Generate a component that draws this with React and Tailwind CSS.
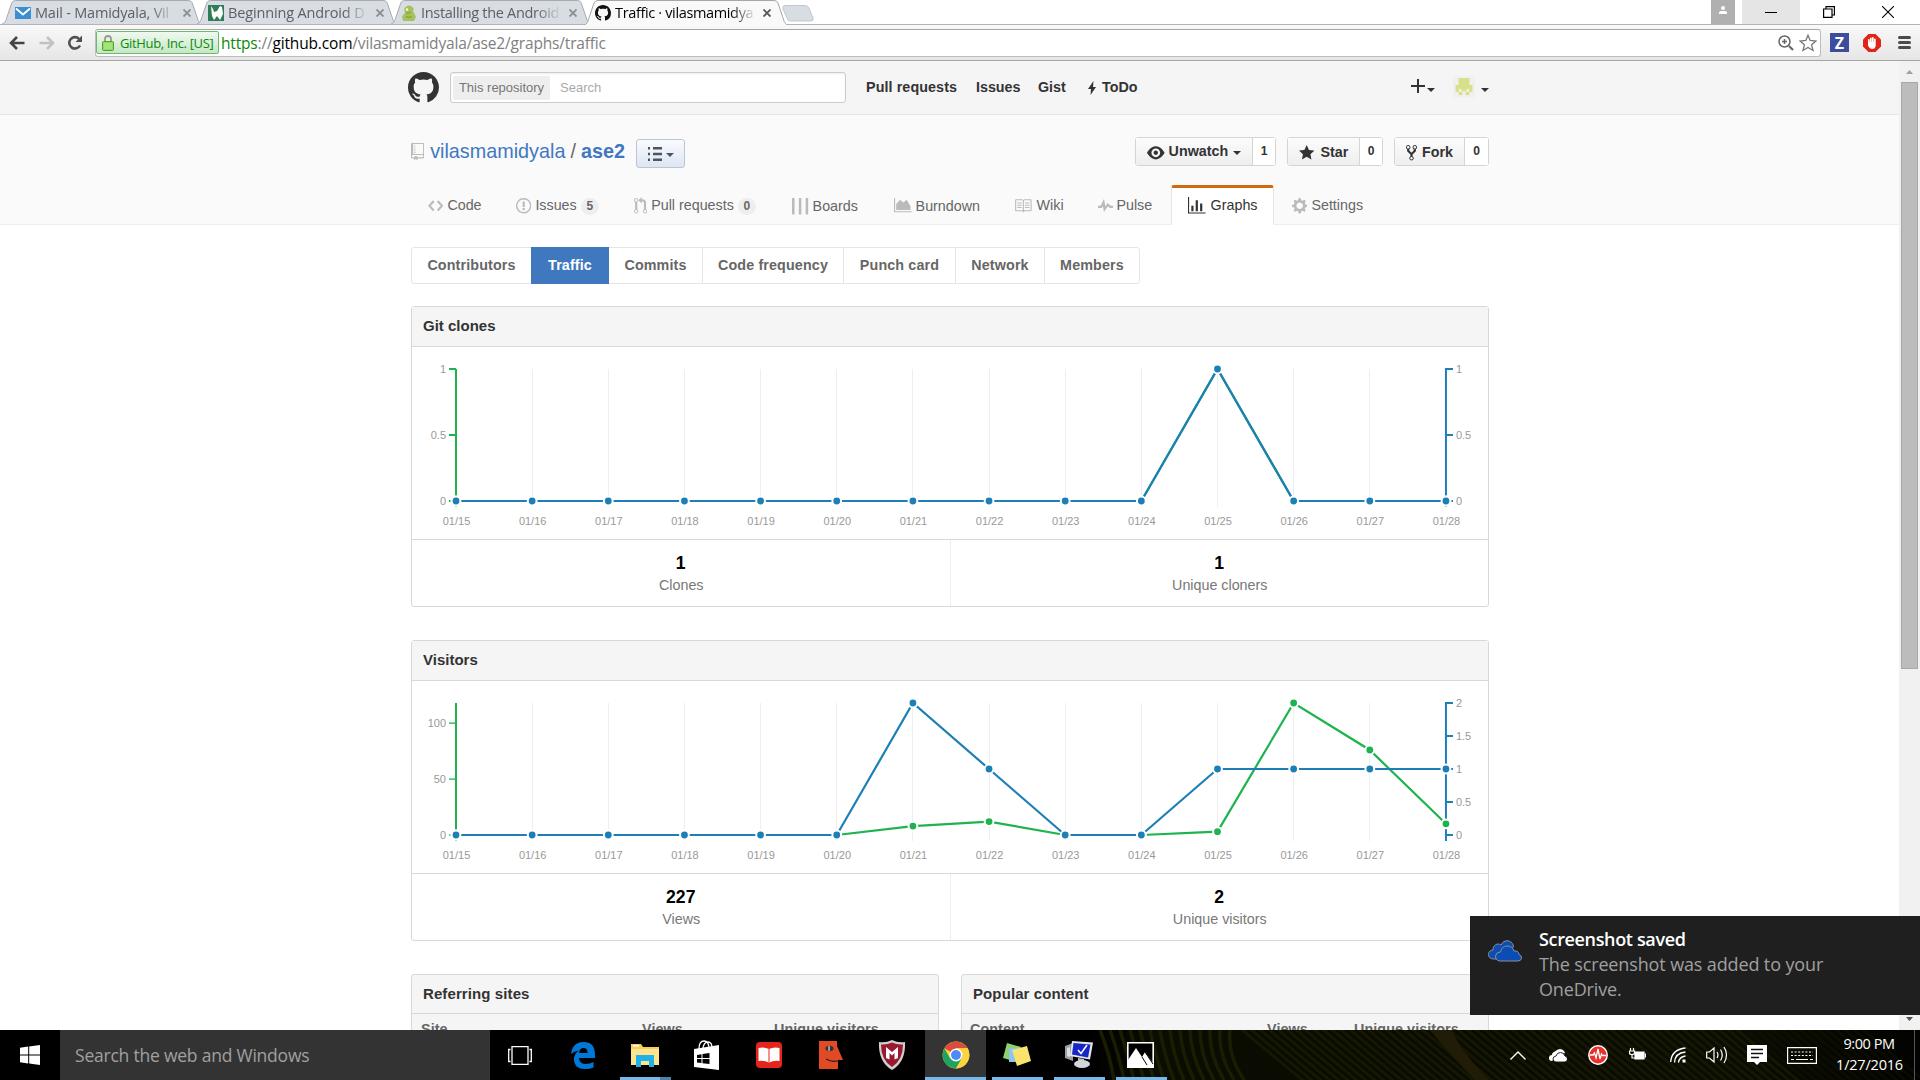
import React from "react";

const ARIAL = "font-['Liberation_Sans',Arial,sans-serif]";
const SEGOE = "font-['Open_Sans','Noto_Sans',sans-serif]";

const PATHS = {
  mark: "M8 0C3.58 0 0 3.58 0 8c0 3.54 2.29 6.53 5.47 7.59.4.07.55-.17.55-.38 0-.19-.01-.82-.01-1.49-2.01.37-2.53-.49-2.69-.94-.09-.23-.48-.94-.82-1.13-.28-.15-.68-.52-.01-.53.63-.01 1.08.58 1.23.82.72 1.21 1.87.87 2.33.66.07-.52.28-.87.51-1.07-1.78-.2-3.64-.89-3.64-3.95 0-.87.31-1.59.82-2.15-.08-.2-.36-1.02.08-2.12 0 0 .67-.21 2.2.82.64-.18 1.32-.27 2-.27.68 0 1.36.09 2 .27 1.53-1.04 2.2-.82 2.2-.82.44 1.1.16 1.92.08 2.12.51.56.82 1.27.82 2.15 0 3.07-1.87 3.75-3.65 3.95.29.25.54.73.54 1.48 0 1.07-.01 1.93-.01 2.2 0 .21.15.46.55.38A8.013 8.013 0 0016 8c0-4.42-3.58-8-8-8z",
  code: "M9.5 3L8 4.5 11.5 8 8 11.5 9.5 13 14 8 9.5 3zm-5 0L0 8l4.5 5L6 11.5 2.5 8 6 4.5 4.5 3z",
  issue: "M7 2.3c3.14 0 5.7 2.56 5.7 5.7s-2.56 5.7-5.7 5.7A5.71 5.71 0 0 1 1.3 8c0-3.14 2.56-5.7 5.7-5.7zM7 1C3.14 1 0 4.14 0 8s3.14 7 7 7 7-3.14 7-7-3.14-7-7-7zm1 3H6v5h2V4zm0 6H6v2h2v-2z",
  pr: "M11 11.28V5c-.03-.78-.34-1.47-.94-2.06C9.46 2.35 8.78 2.03 8 2H7V0L4 3l3 3V4h1c.27.02.48.11.69.31.21.2.3.42.31.69v6.28A1.993 1.993 0 0 0 10 15a1.993 1.993 0 0 0 1-3.72zm-1 2.92c-.66 0-1.2-.55-1.2-1.2 0-.65.55-1.2 1.2-1.2.65 0 1.2.55 1.2 1.2 0 .65-.55 1.2-1.2 1.2zM4 3c0-1.11-.89-2-2-2a1.993 1.993 0 0 0-1 3.72v6.56A1.993 1.993 0 0 0 2 15a1.993 1.993 0 0 0 1-3.72V4.72c.59-.34 1-.98 1-1.72zm-.8 10c0 .66-.55 1.2-1.2 1.2-.65 0-1.2-.55-1.2-1.2 0-.65.55-1.2 1.2-1.2.65 0 1.2.55 1.2 1.2zM2 4.2C1.34 4.2.8 3.65.8 3c0-.65.55-1.2 1.2-1.2.65 0 1.2.55 1.2 1.2 0 .65-.55 1.2-1.2 1.2z",
  book: "M3 5h4v1H3V5zm0 3h4V7H3v1zm0 2h4V9H3v1zm11-5h-4v1h4V5zm0 2h-4v1h4V7zm0 2h-4v1h4V9zm2-6v9c0 .55-.45 1-1 1H9.5l-1 1-1-1H2c-.55 0-1-.45-1-1V3c0-.55.45-1 1-1h5.5l1 1 1-1H15c.55 0 1 .45 1 1zm-8 .5L7.5 3H2v9h6V3.5zm7-.5H9.5l-.5.5V12h6V3z",
  pulse: "M11.5 8L8.8 5.4 6.6 8.5 5.5 1.6 2.38 8H0v2h3.6l.9-1.8.9 5.4L9 8.5l1.6 1.5H14V8h-2.5z",
  graph: "M16 14v1H0V0h1v14h15zM5 13H3V8h2v5zm4 0H7V3h2v10zm4 0h-2V6h2v7z",
  gear: "M14 8.77v-1.6l-1.94-.64-.45-1.09.88-1.84-1.13-1.13-1.81.91-1.09-.45-.69-1.92h-1.6l-.63 1.94-1.11.45-1.84-.88-1.13 1.13.91 1.81-.45 1.09L0 7.23v1.59l1.94.64.45 1.09-.88 1.84 1.13 1.13 1.81-.91 1.09.45.69 1.92h1.59l.63-1.94 1.11-.45 1.84.88 1.13-1.13-.92-1.81.47-1.09L14 8.75v.02zM7 11c-1.66 0-3-1.34-3-3s1.34-3 3-3 3 1.34 3 3-1.34 3-3 3z",
  eye: "M8.06 2C3 2 0 8 0 8s3 6 8.06 6C13 14 16 8 16 8s-3-6-7.94-6zM8 12c-2.2 0-4-1.78-4-4 0-2.2 1.8-4 4-4 2.22 0 4 1.8 4 4 0 2.22-1.78 4-4 4zm2-4c0 1.11-.89 2-2 2-1.11 0-2-.89-2-2 0-1.11.89-2 2-2 1.11 0 2 .89 2 2z",
  star: "M14 6l-4.9-.64L7 1 4.9 5.36 0 6l3.6 3.26L2.67 14 7 11.67 11.33 14l-.93-4.74z",
  fork: "M8 1a1.993 1.993 0 0 0-1 3.72V6L5 8 3 6V4.72A1.993 1.993 0 0 0 2 1a1.993 1.993 0 0 0-1 3.72V6.5l3 3v1.78A1.993 1.993 0 0 0 5 15a1.993 1.993 0 0 0 1-3.72V9.5l3-3V4.72A1.993 1.993 0 0 0 8 1zM2 4.2C1.34 4.2.8 3.65.8 3c0-.65.55-1.2 1.2-1.2.65 0 1.2.55 1.2 1.2 0 .65-.55 1.2-1.2 1.2zm3 10c-.66 0-1.2-.55-1.2-1.2 0-.65.55-1.2 1.2-1.2.65 0 1.2.55 1.2 1.2 0 .65-.55 1.2-1.2 1.2zm3-10c-.66 0-1.2-.55-1.2-1.2 0-.65.55-1.2 1.2-1.2.65 0 1.2.55 1.2 1.2 0 .65-.55 1.2-1.2 1.2z",
  repo: "M4 9H3V8h1v1zm0-3H3v1h1V6zm0-2H3v1h1V4zm0-2H3v1h1V2zm8-1v12c0 .55-.45 1-1 1H6v2l-1.5-1.5L3 16v-2H1c-.55 0-1-.45-1-1V1c0-.55.45-1 1-1h10c.55 0 1 .45 1 1zm-1 10H1v2h2v-1h3v1h5v-2zm0-10H2v9h9V1z",
  boards: "M0 0h2.300v15H0zM6.200 0h2.300v15H6.200zM12.400 0h2.300v15h-2.300z",
  burndown: "M0 0h1v12h15v1H0zM2 11V5.500L5.500 1.500 8.500 4 11.500 1.500 15 7.500V11z",
};

function Oct({ name, w = 16, className = "" }) {
  return (
    <svg viewBox={`0 0 ${w} 16`} width={w * 1.1} height={17.6} fill="currentColor" className={`block shrink-0 ${className}`}>
      <path d={PATHS[name]} />
    </svg>
  );
}

function Caret({ className = "" }) {
  return (
    <svg viewBox="0 0 8 4" className={`block h-[4px] w-[8px] shrink-0 ${className}`} fill="currentColor">
      <path d="M0 0h8L4 4z" />
    </svg>
  );
}

/* ---------- browser chrome ---------- */

function Tab({ active, icon, title, className, titleClass, inset = "ml-[12px]" }) {
  const fill = active ? "#f9f9f9" : "#d8dde4";
  return (
    <div className={`relative flex h-6 shrink-0 items-center ${className}`}>
      <svg viewBox="0 0 204 25" preserveAspectRatio="none" className={`absolute top-0 left-0 w-full ${active ? "h-[25px]" : "h-6"}`}>
        <path d="M0 25C4 24 4 20 6 15L10 3Q11 .5 14 .5H190Q193 .5 194 3L198 15C200 20 200 24 204 25" fill={fill} stroke="#a3a6aa" strokeWidth="1" />
      </svg>
      <div className={`relative mt-[2px] h-4 w-4 shrink-0 ${inset}`}>{icon}</div>
      <div
        className={`relative mt-[2px] ml-[4px] w-[141px] overflow-hidden text-[14.5px] leading-[22px] whitespace-nowrap [mask-image:linear-gradient(to_right,black_82%,transparent)] ${active ? "text-black" : "text-[#5d6064]"} ${titleClass}`}
      >
        {title}
      </div>
      <svg viewBox="0 0 8 8" className="relative mt-[2px] ml-[7px] h-2 w-2 shrink-0" stroke={active ? "#555" : "#8a8d91"} strokeWidth="1.8">
        <path d="M.5 .5l7 7M7.500 .5l-7 7" />
      </svg>
    </div>
  );
}

const mailIcon = (
  <svg viewBox="0 0 16 16" className="h-4 w-4">
    <rect y="2" width="16" height="12" fill="#3b8fd0" />
    <path d="M1 3.500l7 6 7-6" fill="none" stroke="#fff" strokeWidth="1.8" />
  </svg>
);
const wroxIcon = (
  <svg viewBox="0 0 16 16" className="h-4 w-4">
    <rect width="16" height="16" fill="#2f7d57" />
    <path d="M3 1l2 3 1 3 3-1 3-5 2 1 1 7-3 6-3-4-3 4H6L4 11z" fill="#fff" />
  </svg>
);
const droidIcon = (
  <svg viewBox="0 0 16 16" className="h-4 w-4">
    <path d="M3 4q3-5 7-3 4 2 2 5l3 6-2 4H2L1 11l3-3z" fill="#a5c25c" />
    <circle cx="6" cy="4.500" r="1.300" fill="#f3f7df" />
    <path d="M5 8q3 1 5-1M5 12h6" stroke="#7a9a3a" fill="none" />
  </svg>
);
const ghIcon = (
  <svg viewBox="0 0 16 16" className="h-4 w-4">
    <path d={PATHS.mark} fill="#111" />
  </svg>
);

function TabStrip() {
  return (
    <div className="flex h-6 w-full bg-white">
      <Tab className="ml-[2px] w-[200px]" inset="ml-[13px]" icon={mailIcon} title="Mail - Mamidyala, Vil" titleClass="tracking-[-0.2px]" />
      <Tab className="-ml-[5px] w-[200px]" inset="ml-[11px]" icon={wroxIcon} title="Beginning Android D" titleClass="tracking-[-0.15px]" />
      <Tab className="-ml-[6px] w-[200px]" inset="ml-[10px]" icon={droidIcon} title="Installing the Android" titleClass="tracking-[-0.3px]" />
      <div className="z-10 -ml-[7px] flex">
        <Tab active className="w-[204px]" inset="ml-[11px]" icon={ghIcon} title="Traffic · vilasmamidya" titleClass="tracking-[-0.35px]" />
      </div>
      <svg viewBox="0 0 32 17" className="-ml-[6px] mt-[5px] h-[17px] w-8">
        <path d="M3 .5H23Q26 .5 27 3L31 13Q32 16 29 16H8Q6 16 5 13L1 4Q0 .5 3 .5z" fill="#d8dde4" stroke="#c3c7cc" />
      </svg>
      <div className="ml-auto flex h-6">
        <div className="flex w-6 justify-center bg-[#b0b0b0] pt-[6px]">
          <svg viewBox="0 0 8 8" className="h-2 w-2" fill="#fff">
            <circle cx="4" cy="2" r="2" />
            <path d="M0 8V6.500Q0 5 2 5h4q2 0 2 1.500V8z" />
          </svg>
        </div>
        <div className="ml-[7px] flex w-[58px] items-center justify-center bg-[#e5e5e5]">
          <div className="h-px w-3 bg-black" />
        </div>
        <div className="flex w-[58px] items-center justify-center">
          <svg viewBox="0 0 12 12" className="h-3 w-3" fill="none" stroke="#000" strokeWidth="1.200">
            <path d="M.6 3h8.400v8.400H.6zM3 3V.6h8.400V9H9" />
          </svg>
        </div>
        <div className="flex w-[62px] items-center justify-center pr-[2px]">
          <svg viewBox="0 0 12 12" className="h-3 w-3" stroke="#000" strokeWidth="1.100">
            <path d="M0 0l12 12M12 0L0 12" />
          </svg>
        </div>
      </div>
    </div>
  );
}

function Toolbar() {
  return (
    <div className="flex h-[37px] w-full items-center border-t border-b border-t-[#b4b4b4] border-b-[#a5a5a5] bg-gradient-to-b from-[#f9f9f9] to-[#e6e6e6]">
      <svg viewBox="0 0 16 14" className="ml-[9px] h-[14px] w-4" fill="none" stroke="#444" strokeWidth="2.600">
        <path d="M15.500 7H3M8 1L2 7l6 6" />
      </svg>
      <svg viewBox="0 0 16 14" className="ml-[14px] h-[14px] w-4" fill="none" stroke="#c2c2c2" strokeWidth="2.600">
        <path d="M.5 7H13M8 1l6 6-6 6" />
      </svg>
      <svg viewBox="0 0 16 16" className="ml-[12px] h-4 w-4" fill="none" stroke="#505050" strokeWidth="2.600">
        <path d="M13 10.500A5.700 5.700 0 1 1 12 3.800" />
        <path d="M15 .5V7H8.500z" fill="#505050" stroke="none" />
      </svg>
      <div className="ml-[12px] flex h-[28px] w-[1726px] items-center rounded-[3px] border border-[#bdbdbd] border-t-[#a5a5a5] bg-white">
        <div className="flex h-[23px] w-[123px] items-center rounded-[2px] border border-[#6cbb6c] bg-gradient-to-b from-[#f0f9f0] to-[#c5e7c5]">
          <svg viewBox="0 0 12 16" className="ml-[5px] h-4 w-3">
            <path d="M3 7V4q0-3 3-3t3 3v3" fill="none" stroke="#999" strokeWidth="1.800" />
            <rect x=".5" y="6.500" width="11" height="9" rx="1" fill="#8fdc5e" stroke="#5b9c3a" />
            <path d="M2 9h8M2 11h8M2 13h8" stroke="#b6ee92" />
          </svg>
          <span className="ml-[6px] text-[13px] leading-5 tracking-[-0.35px] whitespace-nowrap text-[#0b8a0b]">GitHub, Inc. [US]</span>
        </div>
        <div className="ml-[2px] text-[15.5px] leading-6 tracking-[-0.17px] whitespace-nowrap text-[#808080]">
          <span className="text-[#0b8a0b]">https</span>://<span className="text-black">github.com</span>/vilasmamidyala/ase2/graphs/traffic
        </div>
        <svg viewBox="0 0 16 16" className="ml-auto h-4 w-4" fill="none" stroke="#666" strokeWidth="1.500">
          <circle cx="6.500" cy="6.500" r="5.500" />
          <path d="M11 11l4 4" strokeWidth="2.200" />
          <path d="M4 6.500h5M6.500 4v5" />
        </svg>
        <svg viewBox="0 0 18 18" className="mr-[3px] ml-[5px] h-[18px] w-[18px]" fill="#fff" stroke="#777" strokeWidth="1.300">
          <path d="M9 1.200l2.200 5.300 5.800.5-4.400 3.800 1.400 5.700-5-3-5 3 1.400-5.700L1 7l5.800-.5z" />
        </svg>
      </div>
      <div className="ml-[9px] flex h-[19px] w-[19px] items-center justify-center bg-[#3d4c9f] text-[16px] leading-none font-bold text-white">Z</div>
      <svg viewBox="0 0 18 18" className="ml-[14px] h-[18px] w-[18px]">
        <path d="M5.500 0h7L18 5.500v7L12.500 18h-7L0 12.500v-7z" fill="#e2231a" />
        <path d="M5 9.500V5.500a.9.9 0 0 1 1.700 0V8h.3V4a.9.9 0 0 1 1.700 0v4H9V3.500a.9.9 0 0 1 1.700 0V8h.3V5a.9.9 0 0 1 1.700 0v6q0 4-3.500 4-2.500 0-4.200-3.500z" fill="#fff" />
      </svg>
      <div className="ml-[17px] flex flex-col gap-[2px]">
        <div className="h-[3px] w-[13px] rounded-sm bg-[#4b4b4b]" />
        <div className="h-[3px] w-[13px] rounded-sm bg-[#4b4b4b]" />
        <div className="h-[3px] w-[13px] rounded-sm bg-[#4b4b4b]" />
      </div>
    </div>
  );
}

/* ---------- github page ---------- */

function SiteHeader() {
  return (
    <div className="h-[54px] border-b border-[#e5e5e5] bg-[#f5f5f5]">
      <div className="ml-[408px] flex h-[53px] w-[1081px] items-center text-[14.3px] font-bold text-[#333]">
        <svg viewBox="0 0 16 16" className="h-[31px] w-[31px] shrink-0" fill="#333">
          <path d={PATHS.mark} />
        </svg>
        <div className="ml-[11px] flex h-[31px] w-[396px] shrink-0 items-center rounded-[3px] border border-[#ccc] bg-white text-[13px] font-normal shadow-[inset_0_1px_2px_rgba(0,0,0,0.075)]">
          <span className="ml-[2px] flex h-[24px] w-[97px] items-center justify-center rounded-[2px] bg-[#eee] text-[#767676]">This repository</span>
          <span className="ml-[10px] text-[#aaa]">Search</span>
        </div>
        <span className="ml-[20px] w-[110px] shrink-0 tracking-[0.1px]">Pull requests</span>
        <span className="w-[62px] shrink-0">Issues</span>
        <span className="w-[50px] shrink-0">Gist</span>
        <svg viewBox="0 0 8 14" className="h-[14px] w-2 shrink-0" fill="#333">
          <path d="M5.500 0L0 8h3L2.500 14 8 6H5z" />
        </svg>
        <span className="ml-[6px]">ToDo</span>
        <svg viewBox="0 0 14 14" className="ml-auto h-[14px] w-[14px] shrink-0 -translate-y-[2px]" fill="#333">
          <path d="M6 0h2v6h6v2H8v6H6V8H0V6h6z" />
        </svg>
        <Caret className="mt-[4px] ml-[2px]" />
        <svg viewBox="0 0 22 22" className="ml-[18px] h-[22px] w-[22px] shrink-0 -translate-y-px">
          <rect width="22" height="22" rx="3" fill="#f0f0f0" />
          <path d="M5.500 2h11v7h3v7h-3v3h-4v-4h-3v4h-4v-3h-3V9h3z" fill="#dae089" />
          <path d="M6 13h2.500v3H6zM13.500 13H16v3h-2.500z" fill="#f0f0f0" />
        </svg>
        <Caret className="mt-[4px] ml-[6px]" />
      </div>
    </div>
  );
}

function CountButton({ className, main, count, countClass }) {
  return (
    <div className={`flex h-[29px] shrink-0 rounded-[3px] border border-[#d5d5d5] text-[#333] ${className}`}>
      <div className="flex flex-1 items-center border-r border-[#d5d5d5] bg-gradient-to-b from-[#fcfcfc] to-[#eee] text-[14.3px] font-bold">{main}</div>
      <div className={`flex items-center justify-center bg-white text-[12.1px] font-bold ${countClass}`}>{count}</div>
    </div>
  );
}

function NavItem({ icon, w, label, badge, className, iconClass = "", labelClass = "ml-[4px]" }) {
  return (
    <div className={`flex h-[42px] shrink-0 items-center ${className}`}>
      <Oct name={icon} w={w} className={`text-[#bbb] ${iconClass}`} />
      <span className={labelClass}>{label}</span>
      {badge && (
        <span className="ml-[4px] flex h-[17px] w-[18px] items-center justify-center rounded-full bg-[#eee] text-[12px] font-bold text-[#666]">{badge}</span>
      )}
    </div>
  );
}

function RepoHead() {
  return (
    <div className="h-[110px] border-b border-[#eee] bg-[#fafafa]">
      <div className="ml-[411px] flex h-[70px] w-[1078px] pt-[22px] text-[#666]">
        <Oct name="repo" w={12} className="mt-[6px] text-[#bbb]" />
        <div className="ml-[6px] flex h-[30px] w-[206px] items-center text-[19.8px] whitespace-nowrap">
          <span className="text-[#4078c0]">vilasmamidyala</span>
          <span className="mx-[5px]">/</span>
          <span className="font-bold text-[#4078c0]">ase2</span>
        </div>
        <div className="mt-[2px] flex h-[29px] w-[49px] items-center rounded-[3px] border border-[#bcc5d6] bg-gradient-to-b from-[#fafbfe] to-[#dde5f3] text-[#4c5560]">
          <svg viewBox="0 0 14 14" className="ml-[11px] h-[14px] w-[14px]" fill="currentColor">
            <path d="M0 0h2v2.400H0zM0 5.800h2v2.400H0zM0 11.600h2V14H0zM5 0h9v2.400H5zM5 5.800h9v2.400H5zM5 11.600h9V14H5z" />
          </svg>
          <Caret className="mt-[3px] ml-[4px]" />
        </div>
        <div className="ml-auto flex">
          <CountButton
            className="w-[141px]"
            count="1"
            countClass="w-[22px]"
            main={
              <>
                <Oct name="eye" className="mt-[2px] ml-[11px]" />
                <span className="ml-[4px]">Unwatch</span>
                <Caret className="mt-[2px] ml-[5px]" />
              </>
            }
          />
          <CountButton
            className="ml-[11px] w-[96px]"
            count="0"
            countClass="w-[22px]"
            main={
              <>
                <Oct name="star" w={14} className="mt-[2px] ml-[11px]" />
                <span className="mt-[2px] ml-[6px]">Star</span>
              </>
            }
          />
          <CountButton
            className="ml-[11px] w-[95px]"
            count="0"
            countClass="w-[23px]"
            main={
              <>
                <Oct name="fork" w={10} className="mt-[2px] ml-[11px]" />
                <span className="mt-[2px] ml-[5px]">Fork</span>
              </>
            }
          />
        </div>
      </div>
      <div className="ml-[428px] flex h-[40px] text-[14.3px] text-[#666]">
        <NavItem className="w-[88px]" icon="code" w={14} label="Code" />
        <NavItem className="w-[118px]" icon="issue" w={14} label="Issues" badge="5" />
        <NavItem className="w-[158px]" icon="pr" w={12} label="Pull requests" badge="0" />
        <NavItem className="w-[102px] pt-px" icon="boards" w={16} label="Boards" labelClass="ml-[3px]" />
        <NavItem className="w-[120px] pt-px" icon="burndown" w={16} label="Burndown" />
        <NavItem className="w-[84px]" icon="book" w={16} label="Wiki" labelClass="ml-[5px]" />
        <NavItem className="w-[73px]" icon="pulse" w={14} label="Pulse" labelClass="ml-[3px]" />
        <div className="z-10 flex h-[40px] w-[103px] shrink-0 items-center rounded-t-[3px] border border-t-[3px] border-[#e5e5e5] border-t-[#d26911] border-b-white bg-white text-[#333]">
          <Oct name="graph" className="ml-[16px] text-[#333]" />
          <span className="ml-[5px]">Graphs</span>
        </div>
        <NavItem className="ml-[18px] w-[80px]" icon="gear" w={14} label="Settings" />
      </div>
    </div>
  );
}

function SubNav() {
  const items = [
    ["Contributors", "w-[119px]"],
    ["Traffic", "w-[78px] bg-[#4078c0] text-white -my-px"],
    ["Commits", "w-[94px] border-r"],
    ["Code frequency", "w-[141px] border-r"],
    ["Punch card", "w-[112px] border-r"],
    ["Network", "w-[89px] border-r"],
    ["Members", "w-[94px]"],
  ];
  return (
    <div className="mt-[22px] flex h-[37px] w-[729px] rounded-[3px] border border-[#e5e5e5] text-[14.3px] font-bold tracking-[0.14px] text-[#666]">
      {items.map(([t, c]) => (
        <div key={t} className={`flex shrink-0 items-center justify-center border-[#e5e5e5] ${c}`}>
          {t}
        </div>
      ))}
    </div>
  );
}

const X0 = 44;
const STEP = 76.15;
const TOP = 22;
const BASE = 154;
const GREEN = "#1db34f";
const BLUE = "#1d7fb6";

function Series({ data, max, color }) {
  const pts = data.map((v, i) => [X0 + i * STEP, BASE - (v / max) * (BASE - TOP)]);
  return (
    <g>
      <polyline points={pts.map((p) => p.join(",")).join(" ")} fill="none" stroke={color} strokeWidth="2.2" />
      {pts.map(([x, y], i) => (
        <circle key={i} cx={x} cy={y} r="4.400" fill={color} stroke="#fff" strokeWidth="2" />
      ))}
    </g>
  );
}

function Chart({ left, leftMax, leftTicks, right, rightMax, rightTicks }) {
  const yOf = (v, m) => BASE - (v / m) * (BASE - TOP);
  const xEnd = X0 + 13 * STEP;
  return (
    <svg width="1076" height="192" viewBox="0 0 1076 192" className="block font-['Liberation_Sans',Arial,sans-serif] text-[11px]" fill="#999">
      {left.map((_, i) => (
        <g key={i}>
          {i > 0 && i < 13 && <path d={`M${Math.floor(X0 + i * STEP) + 0.5} ${TOP}V${BASE + 6}`} stroke="#eee" />}
          <text x={X0 + i * STEP + 0.5} y="178" textAnchor="middle">{`01/${15 + i}`}</text>
        </g>
      ))}
      <path d={`M${X0} ${TOP}V${BASE + 6}`} stroke={GREEN} strokeWidth="2" />
      {leftTicks.map((t) => (
        <g key={t}>
          <path d={`M${X0 - 7} ${yOf(t, leftMax)}h7`} stroke={GREEN} strokeWidth={leftMax > 2 ? 1.3 : 2} />
          <text x={X0 - 10} y={yOf(t, leftMax) + 4} textAnchor="end">{t}</text>
        </g>
      ))}
      <path d={`M${xEnd} ${TOP - 1}V${BASE + 6}`} stroke={BLUE} strokeWidth="2" />
      {rightTicks.map((t) => (
        <g key={t}>
          <path d={`M${xEnd} ${yOf(t, rightMax)}h7`} stroke={BLUE} strokeWidth="2" />
          <text x={xEnd + 10} y={yOf(t, rightMax) + 4}>{t}</text>
        </g>
      ))}
      <Series data={left} max={leftMax} color={GREEN} />
      <Series data={right} max={rightMax} color={BLUE} />
    </svg>
  );
}

function Stat({ n, label, className = "" }) {
  return (
    <div className={`flex flex-1 flex-col items-center pt-[12px] ${className}`}>
      <span className="text-[17.6px] leading-[22px] font-bold text-black">{n}</span>
      <span className="pl-px text-[14.3px] leading-[22px] text-[#777]">{label}</span>
    </div>
  );
}

function Panel({ title, chart, stats, className }) {
  return (
    <div className={`h-[301px] w-[1078px] rounded-[3px] border border-[#d8d8d8] bg-white ${className}`}>
      <div className="flex h-[40px] items-center border-b border-[#d8d8d8] bg-[#f5f5f5] px-[11px] text-[15px] font-bold text-[#333]">{title}</div>
      {chart}
      <div className="flex h-[67px] border-t border-[#d8d8d8]">
        <Stat {...stats[0]} className="border-r border-[#eee]" />
        <Stat {...stats[1]} />
      </div>
    </div>
  );
}

function TablePanel({ title, cols }) {
  return (
    <div className="h-[80px] w-[528px] rounded-t-[3px] border border-[#d8d8d8] bg-[#f5f5f5]">
      <div className="flex h-[39px] items-center border-b border-[#d8d8d8] px-[11px] text-[15px] font-bold tracking-[0.1px] text-[#333]">{title}</div>
      <div className="flex pt-[5px] text-[14.3px] leading-5 font-bold tracking-[0.1px] whitespace-nowrap text-[#666]">
        {cols.map(([t, c]) => (
          <span key={t} className={`shrink-0 ${c}`}>{t}</span>
        ))}
      </div>
    </div>
  );
}

const clones = [0, 0, 0, 0, 0, 0, 0, 0, 0, 0, 1, 0, 0, 0];
const views = [0, 0, 0, 0, 0, 0, 8, 12, 0, 0, 3, 118, 76, 10];
const visitors = [0, 0, 0, 0, 0, 0, 2, 1, 0, 0, 1, 1, 1, 1];

function Page() {
  return (
    <div className="flex h-[969px] overflow-hidden">
      <div className={`w-[1899px] shrink-0 bg-white ${ARIAL}`}>
        <SiteHeader />
        <RepoHead />
        <div className="ml-[411px] w-[1078px]">
          <SubNav />
          <Panel
            className="mt-[22px]"
            title="Git clones"
            chart={<Chart left={clones} leftMax={1} leftTicks={[0, 0.5, 1]} right={clones} rightMax={1} rightTicks={[0, 0.5, 1]} />}
            stats={[{ n: "1", label: "Clones" }, { n: "1", label: "Unique cloners" }]}
          />
          <Panel
            className="mt-[33px]"
            title="Visitors"
            chart={<Chart left={views} leftMax={118} leftTicks={[0, 50, 100]} right={visitors} rightMax={2} rightTicks={[0, 0.5, 1, 1.5, 2]} />}
            stats={[{ n: "227", label: "Views" }, { n: "2", label: "Unique visitors" }]}
          />
          <div className="mt-[33px] flex justify-between">
            <TablePanel title="Referring sites" cols={[["Site", "ml-[9px] w-[221px]"], ["Views", "w-[132px]"], ["Unique visitors", ""]]} />
            <TablePanel title="Popular content" cols={[["Content", "ml-[8px] w-[297px]"], ["Views", "w-[87px]"], ["Unique visitors", ""]]} />
          </div>
        </div>
      </div>
      <div className="flex w-[21px] shrink-0 flex-col items-center bg-[#f1f1f1]">
        <svg viewBox="0 0 7 4" className="mt-[9px] h-1 w-[7px]" fill="#a0a0a0"><path d="M0 4h7L3.500 0z" /></svg>
        <div className="mt-[8px] h-[587px] w-[17px] border border-[#a8a8a8] bg-[#bcbcbc]" />
        <svg viewBox="0 0 7 4" className="mt-auto mb-[9px] h-1 w-[7px]" fill="#505050"><path d="M0 0h7L3.500 4z" /></svg>
      </div>
    </div>
  );
}

/* ---------- notification ---------- */

function Toast() {
  return (
    <div className={`absolute top-[916px] right-0 flex h-[99px] w-[450px] bg-[#1f1f1f] ${SEGOE}`}>
      <svg viewBox="0 0 34 22" className="mt-[24px] ml-[18px] h-[22px] w-[34px] shrink-0" fill="#0b4db3" stroke="#8a8f98" strokeWidth="1">
        <path d="M6 19Q.5 19 .5 14.500.5 10.500 5 10 5 5 9.500 4q2.500 0 3.500 1Q15 .5 19 .7q5 .3 6.500 5.300L22 14l-8 5z" />
        <path d="M12 21q-4.500-.5-4.500-5 .5-4 5-4 1-5.500 6.500-6 5.500 0 7 5 2-.5 3.500.5 1.500 1 1.500 3 3 1 2.500 3.500-.5 3-3.500 3z" />
      </svg>
      <div className="mt-[11px] ml-[17px] text-[18px] leading-[25px] whitespace-nowrap text-[#a0a0a0]">
        <div className="font-semibold tracking-[-0.35px] text-white">Screenshot saved</div>
        <div className="tracking-[-0.13px]">The screenshot was added to your</div>
        <div className="tracking-[-0.15px]">OneDrive.</div>
      </div>
    </div>
  );
}

/* ---------- taskbar ---------- */

function Slot({ children, className, bar }) {
  return (
    <div className={`relative flex h-[50px] shrink-0 items-center justify-center ${className}`}>
      {children}
      {bar && <div className="absolute bottom-0 left-0 h-[3px] w-full bg-[#76b9ed]" />}
    </div>
  );
}

function Leaves() {
  const near = Array.from({ length: 14 }, (_, i) => i);
  const far = Array.from({ length: 70 }, (_, i) => i);
  return (
    <svg viewBox="0 0 830 50" className="absolute top-0 right-0 h-[50px] w-[830px]" preserveAspectRatio="none">
      <defs>
        <linearGradient id="leafBase">
          <stop offset="0" stopColor="#000" />
          <stop offset=".08" stopColor="#0b0d01" />
          <stop offset=".5" stopColor="#090a02" />
          <stop offset=".8" stopColor="#0a0b02" />
          <stop offset="1" stopColor="#020200" />
        </linearGradient>
      </defs>
      <rect width="830" height="50" fill="url(#leafBase)" />
      <g fill="none" stroke="#191d02" strokeWidth="3.500">
        {near.map((i) => (
          <path key={i} d={`M${10 + i * 10} 0Q${20 + i * 9} 25 ${24 + i * 10} 50`} />
        ))}
      </g>
      <g fill="none" stroke="#1a1c04" strokeWidth="3">
        {far.map((i) => (
          <path key={i} d={`M${150 + i * 9} -2Q${176 + i * 9} 20 ${215 + i * 9} 52`} opacity={i > 55 ? 0.3 : 0.75} />
        ))}
      </g>
      <path d="M340 0q20 25 45 50h14Q370 20 362 0z" fill="#201c05" />
    </svg>
  );
}

function Taskbar() {
  return (
    <div className={`relative flex h-[50px] w-full overflow-hidden bg-black ${SEGOE}`}>
      <Leaves />
      <Slot className="w-[60px]">
        <svg viewBox="0 0 20 20" className="h-5 w-5" fill="#fff">
          <path d="M0 2.800L8.200 1.600V9.500H0zM9.200 1.400L20 0v9.500H9.200zM0 10.500h8.200v7.900L0 17.200zM9.200 10.500H20V20L9.200 18.500z" />
        </svg>
      </Slot>
      <div className="relative flex w-[430px] shrink-0 items-center bg-[#333] pl-[15px] text-[17.5px] tracking-[-0.22px] whitespace-nowrap text-[#a0a0a0]">Search the web and Windows</div>
      <Slot className="w-[61px] pr-[2px]">
        <svg viewBox="0 0 24 19" className="mt-px h-[19px] w-6" fill="none" stroke="#fff" strokeWidth="1.300">
          <path d="M4 .7h16v17.600H4zM2.500 3.500H.7v12h1.800M21.500 3.500h1.800v12h-1.800" />
        </svg>
      </Slot>
      <Slot className="w-[64px]">
        <svg viewBox="0 0 24 27" className="h-[27px] w-6" fill="#0078d7">
          <path d="M0 12Q1.500 0 12.500 0 24 0 24 13v3H8q.5 6 7 6 4 0 7.500-2v5.500Q19 27 14 27 3 27 3 17q0-5 5-8.500Q3 9 0 12zM8.200 11h8.300q0-5-4-5T8.200 11z" />
        </svg>
      </Slot>
      <Slot className="ml-[5px] w-[51px] pr-[2px]" bar>
        <svg viewBox="0 0 28 24" className="h-6 w-7">
          <path d="M0 1h10l2 3h16v18H0z" fill="#f5cf5e" />
          <path d="M0 6h28v16H0z" fill="#ffe490" />
          <path d="M2 2h6v1.500H2z" fill="#fff" />
          <path d="M5 24V12h18v12h-5v-6h-8v6z" fill="#1fb1e8" />
        </svg>
        <div className="absolute right-0 bottom-0 z-10 h-[3px] w-[11px] bg-[#4f81ab]" />
      </Slot>
      <Slot className="ml-[10px] w-[52px]">
        <svg viewBox="0 0 26 30" className="h-[30px] w-[26px]">
          <path d="M5 9Q5 1 10 1t5 8M9 8q1-6 5-6t4 6" fill="none" stroke="#fff" strokeWidth="1.300" />
          <path d="M0 9L25 5v25L0 27z" fill="#fff" />
          <path d="M3 15l4.500-.7V18H3zM8.500 14l7-1v5h-7zM3 19h4.500v4L3 22.500zM8.500 19h7v5l-7-.8z" fill="#000" />
        </svg>
      </Slot>
      <Slot className="ml-[10px] w-[52px]">
        <svg viewBox="0 0 26 26" className="h-[26px] w-[26px]">
          <rect width="26" height="26" rx="4" fill="#e5251d" />
          <path d="M2.500 6Q8 4.500 13 7q5-2.500 10.500-1v13Q18 18 13 20.500 8 18 2.500 19z" fill="#fff" />
          <path d="M13 7v13" stroke="#e5251d" strokeWidth="1" />
        </svg>
      </Slot>
      <Slot className="ml-[10px] w-[52px]">
        <svg viewBox="0 0 24 28" className="h-7 w-6">
          <path d="M0 0h18v5l6 14h-5v9H0z" fill="#e24a26" />
          <path d="M7 18q7 4 14 1" fill="none" stroke="#222" strokeWidth="1.300" />
          <ellipse cx="10.500" cy="7.500" rx="4" ry="2.800" fill="#333" />
          <path d="M10 5v5" stroke="#fff" />
        </svg>
      </Slot>
      <Slot className="ml-[10px] w-[52px] pr-[2px]">
        <svg viewBox="0 0 28 30" className="h-[30px] w-7">
          <path d="M1 2Q8 3 14 0q6 3 13 2 1 20-13 28Q0 22 1 2z" fill="#cfcfcf" />
          <path d="M3 4.500Q9 5 14 2.500q5 2.500 11 2Q25 20 14 27 3 20 3 4.500z" fill="#9c1730" />
          <path d="M8 18V7l6 5 6-5v11l-3.500 1.500V13L14 15.500 11.500 13v6.500z" fill="#fff" />
        </svg>
      </Slot>
      <Slot className="ml-[6px] w-[61px] bg-[#343434]" bar>
        <svg viewBox="0 0 48 48" className="h-7 w-7">
          <circle cx="24" cy="24" r="23" fill="#fcd43f" />
          <path d="M24 24L4.100 12.500A23 23 0 0 1 43.900 12.500H24z" fill="#dd4b3e" />
          <path d="M4.100 12.500A23 23 0 0 0 24 47l10-17.500-20 .5z" fill="#1da362" />
          <path d="M43.900 12.500H24L34 30 24 47A23 23 0 0 0 43.900 12.500z" fill="#fcd43f" />
          <circle cx="24" cy="24" r="11" fill="#fff" />
          <circle cx="24" cy="24" r="8.500" fill="#4c8bf5" />
        </svg>
      </Slot>
      <Slot className="ml-[6px] w-[51px] pr-[2px]" bar>
        <svg viewBox="0 0 28 24" className="h-6 w-7">
          <path d="M4 0l14 4-4 15L0 15z" fill="#8fd071" />
          <path d="M6 5h14v14H6z" fill="#8cc4ee" />
          <path d="M9 7l15-4 4 15-14 5z" fill="#f9e36c" />
        </svg>
      </Slot>
      <Slot className="ml-[11px] w-[51px] pr-[2px]" bar>
        <svg viewBox="0 0 28 28" className="h-7 w-7">
          <path d="M0 5l8-3v18l-8-3z" fill="#9aa0a8" />
          <path d="M2 7l3-1v10l-3-1z" fill="#d9dde2" />
          <path d="M7 0l21 1.500-3 17L5 15z" fill="#e4e7eb" />
          <path d="M8.500 2l17 1.500L23 16.500 7 13.500z" fill="#1727c6" />
          <path d="M13 9l3 3.500L22 4" fill="none" stroke="#fff" strokeWidth="1.500" />
          <path d="M13 17l6 1v3h-6z" fill="#b9bdc3" />
          <ellipse cx="17" cy="23" rx="8" ry="4" fill="#d4d6d9" />
        </svg>
      </Slot>
      <Slot className="ml-[11px] w-[51px] pr-[2px]" bar>
        <svg viewBox="0 0 27 26" className="h-[26px] w-[27px]">
          <path d="M.8 .8h25.400v24.400H.8z" fill="#000" stroke="#fff" strokeWidth="1.600" />
          <path d="M1 25V18L9 6l6 9 3-5 8 11v4z" fill="#fff" />
          <path d="M15 15l5 8M18 10l8 12" stroke="#000" strokeWidth="1" />
        </svg>
      </Slot>
      <div className="relative ml-auto flex h-[50px] items-center">
        <svg viewBox="0 0 16 9" className="mt-px h-[9px] w-4" fill="none" stroke="#fff" strokeWidth="1.400"><path d="M.5 8.500L8 1l7.500 7.500" /></svg>
        <svg viewBox="0 0 18 13" className="ml-[23px] h-[13px] w-[18px]">
          <path d="M3 12Q0 12 0 9t3-3q0-3 3-3.500Q8 0 11 0q4 .5 5 4l-7 3z" fill="#fff" />
          <path d="M7 13q-3-.5-3-3t3-3q1-3.500 4.500-3.500T16 7q2.500.5 2.500 3T16 13z" fill="#fff" stroke="#111" strokeWidth=".9" />
        </svg>
        <svg viewBox="0 0 20 20" className="ml-[21px] h-5 w-5">
          <circle cx="10" cy="10" r="9.200" fill="#e5322b" stroke="#fff" strokeWidth="1.500" />
          <path d="M2 10h3l1.500-2L8 13l2-9 2 10 1.500-5 1 1.500H18" fill="none" stroke="#fff" strokeWidth="1.300" />
        </svg>
        <svg viewBox="0 0 17 13" className="-mt-px ml-[21px] h-[13px] w-[17px]" fill="none" stroke="#fff" strokeWidth="1.200">
          <path d="M6 4h9v7H6z" fill="#fff" />
          <path d="M15.500 6h1v3h-1M1.500 0v3M4.500 0v3M.5 3h5v2q0 1.500-2.500 1.500Q.5 6.500.5 5zM3 6.500V10h3" />
        </svg>
        <svg viewBox="0 0 16 16" className="ml-[24px] h-4 w-4" fill="none" stroke="#fff" strokeWidth="1.300">
          <path d="M.7 15Q1.500 2.500 15.500 1M4.500 15.500Q5 6 15.500 5M8.500 15.500Q9 10 15.500 9" />
          <path d="M12.500 12.500h3v3h-3z" fill="#fff" stroke="none" />
        </svg>
        <svg viewBox="0 0 22 18" className="ml-[20px] h-[18px] w-[22px]" fill="none" stroke="#fff" strokeWidth="1.200">
          <path d="M.7 6h2.800L8 2v14L3.500 12H.7zM11 6q2 3 0 6M14.500 3.500q3.500 5.500 0 11M18 1q5 8 0 16" />
        </svg>
        <svg viewBox="0 0 20 20" className="ml-[19px] h-5 w-5">
          <path d="M0 0h20v17h-7l-3 3-3-3H0z" fill="#fff" />
          <path d="M4 4.500h12M4 8.500h12M4 12.500h8" stroke="#111" strokeWidth="1.300" />
        </svg>
        <svg viewBox="0 0 30 17" className="mt-px ml-[20px] h-[17px] w-[30px]" fill="none" stroke="#fff" strokeWidth="1.200">
          <path d="M.6 .6h28.800v15.800H.6z" />
          <path d="M4 5h22M4 8.500h22" strokeDasharray="2 1.600" />
          <path d="M4 12.500h3M9 12.500h12M23 12.500h3" />
        </svg>
        <div className="ml-[19px] flex w-[68px] flex-col items-center pb-[2px] text-[14.5px] leading-[21px] whitespace-nowrap text-white">
          <span className="pr-[2px] tracking-[-0.45px]">9:00 PM</span>
          <span className="pr-px tracking-[-0.2px]">1/27/2016</span>
        </div>
        <div className="mr-[5px] ml-[10px] h-[50px] w-px bg-[#555]" />
      </div>
    </div>
  );
}

export default function App() {
  return (
    <div className="relative h-[1080px] w-[1920px] overflow-hidden bg-white">
      <div className={SEGOE}>
        <TabStrip />
        <Toolbar />
      </div>
      <Page />
      <Taskbar />
      <Toast />
    </div>
  );
}
